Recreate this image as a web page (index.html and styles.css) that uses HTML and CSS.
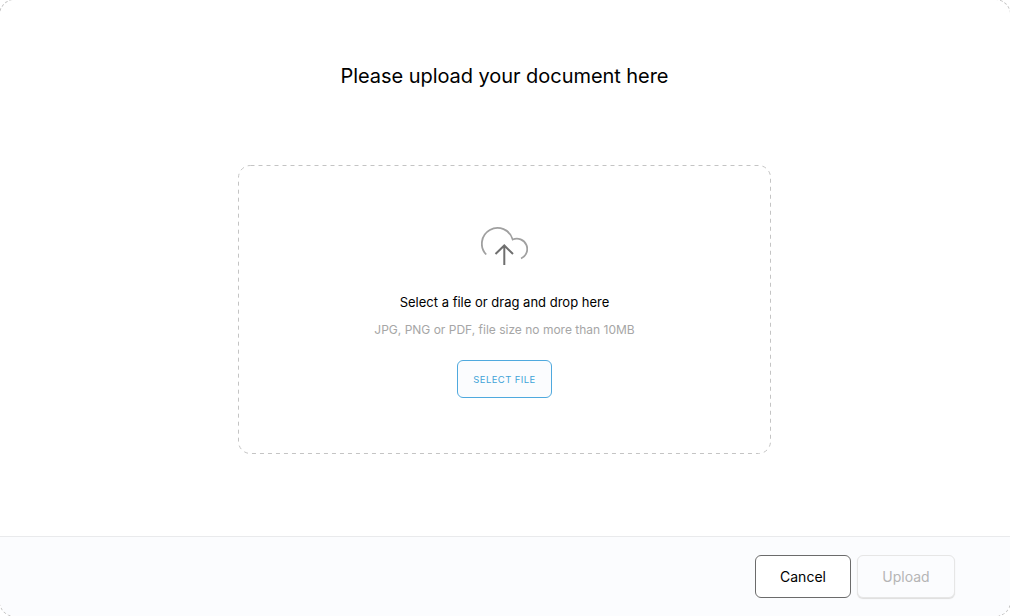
FILE: index.html
```html
<!DOCTYPE html>
<html lang="en">
<head>
    <meta charset="UTF-8">
    <meta name="viewport" content="width=device-width, initial-scale=1.0">
    <title>Upload document</title>
    <link rel="stylesheet" href="styles.css">
</head>
<body>

    <div class="modal">
        <div class="modal-body">
            <h1>Please upload your document here</h1>

            <div class="dropzone">
                <svg class="dropzone-edge" width="533" height="289" fill="none">
                    <rect x="0.5" y="0.5" width="532" height="288" rx="12" stroke="#c4c4c4" stroke-dasharray="4 4"/>
                </svg>
                <svg class="upload-icon" width="47" height="41" viewBox="0 0 47 41" fill="none">
                    <path class="cloud" d="M5.200 30.500A15.700 15.700 0 1 1 31.700 15.500A10 10 0 0 1 40 34.500"/>
                    <path class="arrow" d="M23.300 22V41M14.500 30L23.300 21.500L32 30"/>
                </svg>
                <p class="drop-title">Select a file or drag and drop here</p>
                <p class="drop-hint">JPG, PNG or PDF, file size no more than 10MB</p>
                <button class="select-btn" type="button">SELECT FILE</button>
            </div>
        </div>

        <div class="modal-footer">
            <button class="cancel-btn" type="button">Cancel</button>
            <button class="upload-btn" type="button" disabled>Upload</button>
        </div>
    </div>

</body>
</html>
```

FILE: styles.css
```css
body {
    margin: 0;
    overflow: hidden;
    font-family: 'Inter', sans-serif;
    background-color: #fff;
    color: #000;
}

/* the dashed edge sits just outside the window, only the corners show */
.modal {
    height: 618px;
    margin: -1px;
    box-sizing: border-box;
    display: flex;
    flex-direction: column;
    border: 1px dashed #c4c4c4;
    border-radius: 16px;
    overflow: hidden;
}

.modal-body {
    flex: 1;
    padding-right: 1px;
    display: flex;
    flex-direction: column;
    align-items: center;
}

h1 {
    margin: 62px 0 0;
    font-size: 20px;
    line-height: 28px;
    font-weight: 400;
    letter-spacing: -0.05px;
}

.dropzone {
    position: relative;
    width: 533px;
    height: 289px;
    box-sizing: border-box;
    margin-top: 75px;
    padding-top: 59px;
    display: flex;
    flex-direction: column;
    align-items: center;
}

.dropzone-edge {
    position: absolute;
    top: 0;
    left: 0;
}

.cloud {
    stroke: #a0a0a0;
    stroke-width: 1.8;
}

.arrow {
    stroke: #6f6f6f;
    stroke-width: 2;
}

.drop-title {
    margin: 28px 0 0;
    font-size: 13px;
    line-height: 18px;
}

.drop-hint {
    margin: 10px 0 0;
    font-size: 12px;
    line-height: 18px;
    color: #a6a6a6;
}

.select-btn {
    width: 95px;
    height: 38px;
    margin-top: 21px;
    padding: 0;
    font-family: inherit;
    font-size: 9.5px;
    letter-spacing: 0.4px;
    color: #3fa3d8;
    background-color: #fbfcfe;
    border: 1px solid #4fa9de;
    border-radius: 6px;
}

.modal-footer {
    height: 80px;
    flex-shrink: 0;
    box-sizing: border-box;
    padding: 18px 55px 0 0;
    display: flex;
    justify-content: flex-end;
    gap: 6px;
    background-color: #fbfcfe;
    border-top: 1px solid #e9eaec;
}

.modal-footer button {
    height: 43px;
    padding: 0;
    font-family: inherit;
    font-size: 14px;
    border-radius: 6px;
}

.cancel-btn {
    width: 96px;
    color: #000;
    background-color: #fff;
    border: 1px solid #6b6b6b;
}

.upload-btn {
    width: 98px;
    color: #b5b5b5;
    background-color: #fbfcfe;
    border: 1px solid #e6e6e6;
    box-shadow: 0 1px 1px #ddd;
}
```
